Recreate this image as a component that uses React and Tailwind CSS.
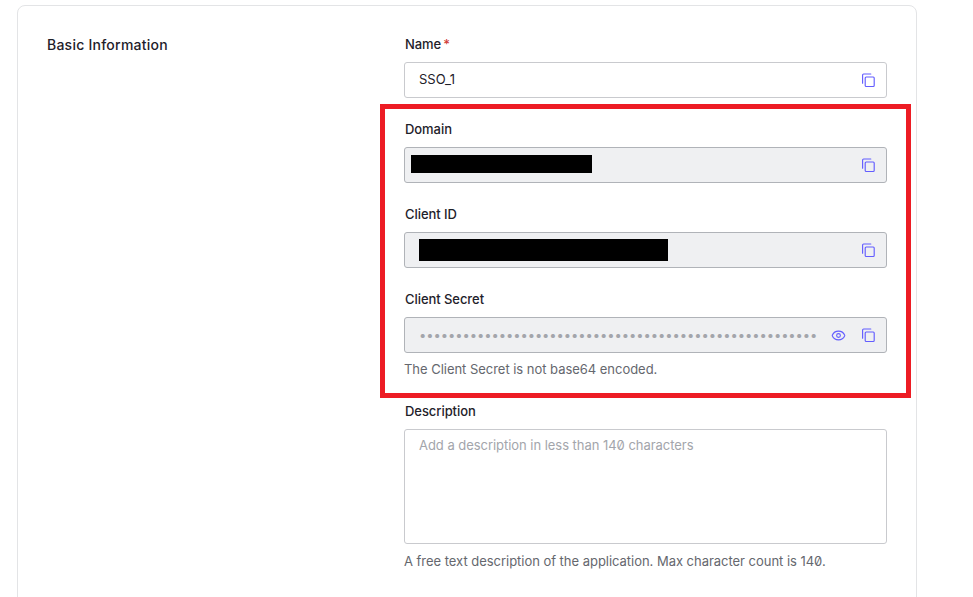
import React from 'react';
import { Eye } from 'lucide-react';

function CopyButton() {
  return (
    <svg width="16" height="16" viewBox="0 0 16 16" fill="none" stroke="#635dff" strokeWidth="1.15" className="shrink-0">
      <rect x="5.2" y="5" width="9" height="9.5" rx="1" />
      <path d="M2.6 11.2V3a1 1 0 0 1 1-1h7.2" strokeLinecap="round" />
    </svg>
  );
}

function Field({ label, required, disabled, hint, children, actions }) {
  return (
    <div className="mb-[22px]">
      <label className="mb-[8px] block h-[19px] pl-[1px] text-[13px] leading-[19px] font-medium tracking-[-0.06px] text-[#1e212a]">
        {label}
        {required && <span className="ml-[2px] text-[#d03c38]">*</span>}
      </label>
      <div
        className={`flex h-9 items-center rounded-[3px] border pr-[10px] ${
          disabled ? 'border-[#b0b3b8] bg-[#eff0f2]' : 'border-[#c9cace] bg-white'
        }`}
      >
        <div className="min-w-0 flex-1">{children}</div>
        {actions}
      </div>
      {hint && (
        <p className="mt-[6px] pb-[1px] text-[13px] leading-5 tracking-[-0.03px] text-[#65676e] [font-feature-settings:'zero']">
          {hint}
        </p>
      )}
    </div>
  );
}

export default function App() {
  return (
    <div className="relative h-[597px] w-[973px] overflow-hidden bg-white font-['Inter',sans-serif]">
      <div className="mt-[5px] ml-[17px] flex h-[640px] w-[900px] rounded-t-[8px] border border-[#e3e4e6] pt-[29px] pr-[29px] pl-[29px]">
        <h2 className="w-[357px] shrink-0 text-sm leading-5 font-medium tracking-[0.24px] text-[#1e212a]">Basic Information</h2>
        <div className="min-w-0 flex-1">
          <Field label="Name" required actions={<CopyButton />}>
            <div className="mb-[3px] pl-[14px] text-[13px] leading-5 text-[#1e212a]">SSO_1</div>
          </Field>
          <Field label="Domain" disabled actions={<CopyButton />}>
            <div className="mb-[2px] ml-[6px] h-[18px] w-[181px] bg-black" />
          </Field>
          <Field label="Client ID" disabled actions={<CopyButton />}>
            <div className="ml-[14px] h-[22px] w-[249px] bg-black" />
          </Field>
          <Field
            label="Client Secret"
            disabled
            hint="The Client Secret is not base64 encoded."
            actions={
              <div className="flex items-center gap-[14px]">
                <Eye size={15} strokeWidth={1.75} className="text-[#635dff]" />
                <CopyButton />
              </div>
            }
          >
            <div className="pl-[14px] text-[13px] leading-none tracking-[-0.07px] whitespace-nowrap text-[#a3a5ab]">
              {'•'.repeat(55)}
            </div>
          </Field>
          <label className="mb-[8px] block h-[19px] pl-[1px] text-[13px] leading-[19px] font-medium tracking-[-0.06px] text-[#1e212a]">
            Description
          </label>
          <textarea
            readOnly
            placeholder="Add a description in less than 140 characters"
            className="block h-[115px] w-full resize-none rounded-[3px] border border-[#c9cace] px-[14px] py-[5px] text-[13px] leading-5 tracking-[-0.04px] outline-none [font-feature-settings:'zero'] placeholder:text-[#a3a5ab]"
          />
          <p className="mt-[7px] text-[13px] leading-5 tracking-[-0.03px] text-[#65676e] [font-feature-settings:'zero']">
            A free text description of the application. Max character count is 140.
          </p>
        </div>
      </div>
      {/* red annotation drawn over the form */}
      <div className="pointer-events-none absolute top-[104px] left-[380px] h-[294px] w-[531px] border-[5px] border-[#ed1c24]" />
    </div>
  );
}
